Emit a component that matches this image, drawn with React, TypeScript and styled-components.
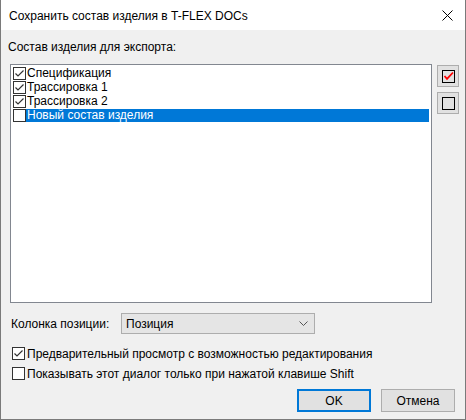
import React, { useState } from "react";
import styled, { createGlobalStyle } from "styled-components";

const GlobalStyle = createGlobalStyle`
  html, body {
    margin: 0;
    padding: 0;
    background: #ffffff;
  }
  * {
    box-sizing: border-box;
  }
`;

const Window = styled.div`
  width: 466px;
  height: 420px;
  display: flex;
  flex-direction: column;
  border: 1px solid #7a7a7a;
  border-top: none;
  background: #f0f0f0;
  font-family: "Segoe UI", "Liberation Sans", Arial, sans-serif;
  font-size: 12px;
  color: #000000;
  overflow: hidden;
`;

const TitleBar = styled.div`
  height: 30px;
  flex-shrink: 0;
  background: #ffffff;
  display: flex;
  align-items: center;
  justify-content: space-between;
  padding-left: 8px;
`;

const Title = styled.div`
  font-size: 12px;
  color: #000000;
  margin-top: 1px;
`;

const CloseButton = styled.div`
  width: 46px;
  height: 30px;
  display: flex;
  align-items: center;
  justify-content: center;
  padding-left: 10px;
`;

const Body = styled.div`
  flex: 1;
  display: flex;
  flex-direction: column;
`;

const SectionLabel = styled.div`
  height: 15px;
  line-height: 15px;
  margin: 10px 0 9px 7px;
`;

const ListArea = styled.div`
  display: flex;
  gap: 5px;
  margin-left: 9px;
`;

const ListBox = styled.div`
  width: 422px;
  height: 239px;
  background: #ffffff;
  border: 1px solid #828790;
  padding: 1px 2px 1px 2px;
`;

const ListRow = styled.div`
  height: 14px;
  display: flex;
  align-items: center;
`;

const RowText = styled.span<{ $selected?: boolean }>`
  flex: 1;
  height: 13px;
  line-height: 13px;
  padding-left: 1px;
  background: ${(p) => (p.$selected ? "#0078d7" : "transparent")};
  color: ${(p) => (p.$selected ? "#ffffff" : "#000000")};
  white-space: nowrap;
`;

const Box = styled.span<{ $size?: number }>`
  width: ${(p) => p.$size ?? 13}px;
  height: ${(p) => p.$size ?? 13}px;
  flex-shrink: 0;
  border: 1px solid #333333;
  background: #ffffff;
  display: inline-flex;
  align-items: center;
  justify-content: center;
`;

const SideButtons = styled.div`
  display: flex;
  flex-direction: column;
  gap: 5px;
  padding-top: 1px;
`;

const SideButton = styled.div`
  width: 22px;
  height: 22px;
  background: #e1e1e1;
  border: 1px solid #adadad;
  display: flex;
  align-items: center;
  justify-content: center;
`;

const IconSquare = styled.span`
  width: 13px;
  height: 13px;
  border: 1px solid #000000;
  background: transparent;
  display: inline-flex;
  align-items: center;
  justify-content: center;
`;

const ComboRow = styled.div`
  display: flex;
  align-items: center;
  margin: 10px 0 0 10px;
  height: 21px;
`;

const ComboLabel = styled.div`
  width: 110px;
`;

const Combo = styled.div`
  width: 194px;
  height: 21px;
  background: #e5e5e5;
  border: 1px solid #adadad;
  display: flex;
  align-items: center;
  justify-content: space-between;
  padding: 0 6px 0 4px;
`;

const CheckRow = styled.label`
  display: flex;
  align-items: center;
  gap: 2px;
  height: 15px;
  margin-left: 11px;
  white-space: nowrap;
`;

const CheckList = styled.div`
  display: flex;
  flex-direction: column;
  gap: 5px;
  margin-top: 12px;
`;

const Footer = styled.div`
  display: flex;
  justify-content: flex-end;
  gap: 10px;
  margin: 8px 10px 0 0;
`;

const DialogButton = styled.div<{ $default?: boolean }>`
  width: 74px;
  height: 23px;
  display: flex;
  align-items: center;
  justify-content: center;
  background: #e1e1e1;
  border: ${(p) => (p.$default ? "2px solid #0078d7" : "1px solid #adadad")};
`;

const CheckMark = ({ color = "#333333" }: { color?: string }) => (
  <svg width="11" height="11" viewBox="0 0 11 11">
    <path d="M1.5 5.5 L4 8 L9.5 2.5" fill="none" stroke={color} strokeWidth="1.2" />
  </svg>
);

const items = [
  { name: "Спецификация", checked: true },
  { name: "Трассировка 1", checked: true },
  { name: "Трассировка 2", checked: true },
  { name: "Новый состав изделия", checked: false },
];

const App: React.FC = () => {
  const [selected] = useState(3);

  return (
    <>
      <GlobalStyle />
      <Window>
        <TitleBar>
          <Title>Сохранить состав изделия в T-FLEX DOCs</Title>
          <CloseButton>
            <svg width="11" height="11" viewBox="0 0 11 11">
              <path d="M0.5 0.5 L10.5 10.5 M10.5 0.5 L0.5 10.5" stroke="#000" strokeWidth="1" />
            </svg>
          </CloseButton>
        </TitleBar>
        <Body>
          <SectionLabel>Состав изделия для экспорта:</SectionLabel>
          <ListArea>
            <ListBox>
              {items.map((it, i) => (
                <ListRow key={it.name}>
                  <Box>{it.checked && <CheckMark />}</Box>
                  <RowText $selected={i === selected}>{it.name}</RowText>
                </ListRow>
              ))}
            </ListBox>
            <SideButtons>
              <SideButton>
                <IconSquare>
                  <svg width="11" height="11" viewBox="0 0 11 11">
                    <path d="M1.5 5 L4 7.8 L10 1.5" fill="none" stroke="#ff0000" strokeWidth="1.8" />
                  </svg>
                </IconSquare>
              </SideButton>
              <SideButton>
                <IconSquare />
              </SideButton>
            </SideButtons>
          </ListArea>
          <ComboRow>
            <ComboLabel>Колонка позиции:</ComboLabel>
            <Combo>
              <span>Позиция</span>
              <svg width="9" height="5" viewBox="0 0 9 5">
                <path d="M0.5 0.5 L4.5 4.5 L8.5 0.5" fill="none" stroke="#555" strokeWidth="1" />
              </svg>
            </Combo>
          </ComboRow>
          <CheckList>
            <CheckRow>
              <Box>
                <CheckMark />
              </Box>
              Предварительный просмотр с возможностью редактирования
            </CheckRow>
            <CheckRow>
              <Box />
              Показывать этот диалог только при нажатой клавише Shift
            </CheckRow>
          </CheckList>
          <Footer>
            <DialogButton $default>OK</DialogButton>
            <DialogButton>Отмена</DialogButton>
          </Footer>
        </Body>
      </Window>
    </>
  );
};

export default App;
